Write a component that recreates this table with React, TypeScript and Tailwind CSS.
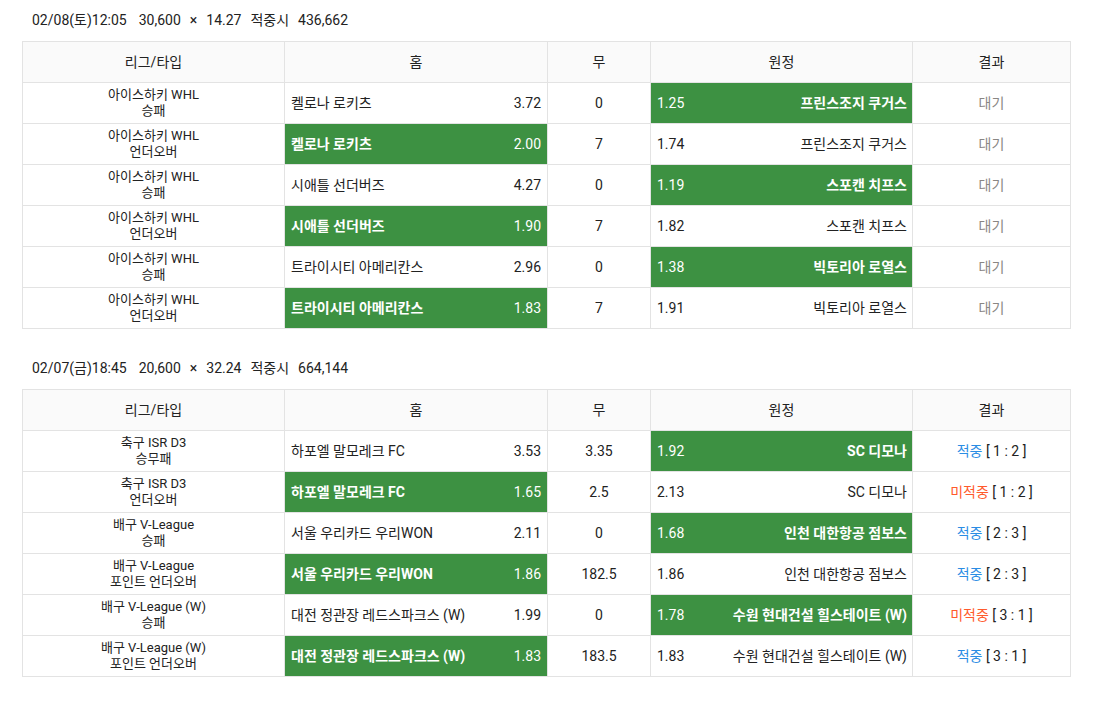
import React from "react";

type Row = {
  league: string;
  type: string;
  home: string;
  homeOdds: string;
  draw: string;
  away: string;
  awayOdds: string;
  pick: "home" | "away";
  result: "wait" | "hit" | "miss";
  score?: string;
};

type Slip = {
  date: string;
  stake: string;
  odds: string;
  payout: string;
  rows: Row[];
};

const slips: Slip[] = [
  {
    date: "02/08(토)12:05",
    stake: "30,600",
    odds: "14.27",
    payout: "436,662",
    rows: [
      { league: "아이스하키 WHL", type: "승패", home: "켈로나 로키츠", homeOdds: "3.72", draw: "0", away: "프린스조지 쿠거스", awayOdds: "1.25", pick: "away", result: "wait" },
      { league: "아이스하키 WHL", type: "언더오버", home: "켈로나 로키츠", homeOdds: "2.00", draw: "7", away: "프린스조지 쿠거스", awayOdds: "1.74", pick: "home", result: "wait" },
      { league: "아이스하키 WHL", type: "승패", home: "시애틀 선더버즈", homeOdds: "4.27", draw: "0", away: "스포캔 치프스", awayOdds: "1.19", pick: "away", result: "wait" },
      { league: "아이스하키 WHL", type: "언더오버", home: "시애틀 선더버즈", homeOdds: "1.90", draw: "7", away: "스포캔 치프스", awayOdds: "1.82", pick: "home", result: "wait" },
      { league: "아이스하키 WHL", type: "승패", home: "트라이시티 아메리칸스", homeOdds: "2.96", draw: "0", away: "빅토리아 로열스", awayOdds: "1.38", pick: "away", result: "wait" },
      { league: "아이스하키 WHL", type: "언더오버", home: "트라이시티 아메리칸스", homeOdds: "1.83", draw: "7", away: "빅토리아 로열스", awayOdds: "1.91", pick: "home", result: "wait" },
    ],
  },
  {
    date: "02/07(금)18:45",
    stake: "20,600",
    odds: "32.24",
    payout: "664,144",
    rows: [
      { league: "축구 ISR D3", type: "승무패", home: "하포엘 말모레크 FC", homeOdds: "3.53", draw: "3.35", away: "SC 디모나", awayOdds: "1.92", pick: "away", result: "hit", score: "1 : 2" },
      { league: "축구 ISR D3", type: "언더오버", home: "하포엘 말모레크 FC", homeOdds: "1.65", draw: "2.5", away: "SC 디모나", awayOdds: "2.13", pick: "home", result: "miss", score: "1 : 2" },
      { league: "배구 V-League", type: "승패", home: "서울 우리카드 우리WON", homeOdds: "2.11", draw: "0", away: "인천 대한항공 점보스", awayOdds: "1.68", pick: "away", result: "hit", score: "2 : 3" },
      { league: "배구 V-League", type: "포인트 언더오버", home: "서울 우리카드 우리WON", homeOdds: "1.86", draw: "182.5", away: "인천 대한항공 점보스", awayOdds: "1.86", pick: "home", result: "hit", score: "2 : 3" },
      { league: "배구 V-League (W)", type: "승패", home: "대전 정관장 레드스파크스 (W)", homeOdds: "1.99", draw: "0", away: "수원 현대건설 힐스테이트 (W)", awayOdds: "1.78", pick: "away", result: "miss", score: "3 : 1" },
      { league: "배구 V-League (W)", type: "포인트 언더오버", home: "대전 정관장 레드스파크스 (W)", homeOdds: "1.83", draw: "183.5", away: "수원 현대건설 힐스테이트 (W)", awayOdds: "1.83", pick: "home", result: "hit", score: "3 : 1" },
    ],
  },
];

const cell = "border border-[#e3e3e3] h-[41px] p-0";

function Result({ row }: { row: Row }) {
  if (row.result === "wait") return <span className="text-[#8a8684]">대기</span>;
  return (
    <span>
      <span className={row.result === "hit" ? "text-[#2b8de4]" : "text-[#ff5a2c]"}>
        {row.result === "hit" ? "적중" : "미적중"}
      </span>
      <span className="text-[#222]"> [ {row.score} ]</span>
    </span>
  );
}

function SlipTable({ slip }: { slip: Slip }) {
  return (
    <div>
      <div className="h-[41px] flex items-center pl-[10px] text-[14px] text-[#222] whitespace-pre">
        <span>{slip.date}</span>
        <span className="ml-[12px]">{slip.stake}</span>
        <span className="ml-[9px]">×</span>
        <span className="ml-[9px]">{slip.odds}</span>
        <span className="ml-[9px]">적중시</span>
        <span className="ml-[9px]">{slip.payout}</span>
      </div>
      <table className="w-[1049px] border-collapse table-fixed text-[14px] text-[#222]">
        <colgroup>
          <col className="w-[262px]" />
          <col className="w-[263px]" />
          <col className="w-[103px]" />
          <col className="w-[262px]" />
          <col />
        </colgroup>
        <thead>
          <tr className="bg-[#fafafa]">
            <th className={`${cell} font-normal`}>리그/타입</th>
            <th className={`${cell} font-normal`}>홈</th>
            <th className={`${cell} font-normal`}>무</th>
            <th className={`${cell} font-normal`}>원정</th>
            <th className={`${cell} font-normal`}>결과</th>
          </tr>
        </thead>
        <tbody>
          {slip.rows.map((r, i) => {
            const homeOn = r.pick === "home";
            const awayOn = r.pick === "away";
            return (
              <tr key={i}>
                <td className={`${cell} text-center text-[13px] leading-[16px]`}>
                  <div>{r.league}</div>
                  <div>{r.type}</div>
                </td>
                <td className={`${cell} ${homeOn ? "bg-[#3d9142] text-white" : ""}`}>
                  <div className="flex justify-between items-center pl-[6px] pr-[6px]">
                    <span className={homeOn ? "font-bold" : ""}>{r.home}</span>
                    <span>{r.homeOdds}</span>
                  </div>
                </td>
                <td className={`${cell} text-center`}>{r.draw}</td>
                <td className={`${cell} ${awayOn ? "bg-[#3d9142] text-white" : ""}`}>
                  <div className="flex justify-between items-center pl-[6px] pr-[5px]">
                    <span>{r.awayOdds}</span>
                    <span className={awayOn ? "font-bold" : ""}>{r.away}</span>
                  </div>
                </td>
                <td className={`${cell} text-center`}>
                  <Result row={r} />
                </td>
              </tr>
            );
          })}
        </tbody>
      </table>
    </div>
  );
}

export default function App() {
  return (
    <div
      className="bg-white min-h-[702px] pl-[22px] flex flex-col gap-[19px]"
      style={{ fontFamily: 'Roboto, "Noto Sans CJK KR", sans-serif' }}
    >
      {slips.map((s, i) => (
        <SlipTable key={i} slip={s} />
      ))}
    </div>
  );
}
